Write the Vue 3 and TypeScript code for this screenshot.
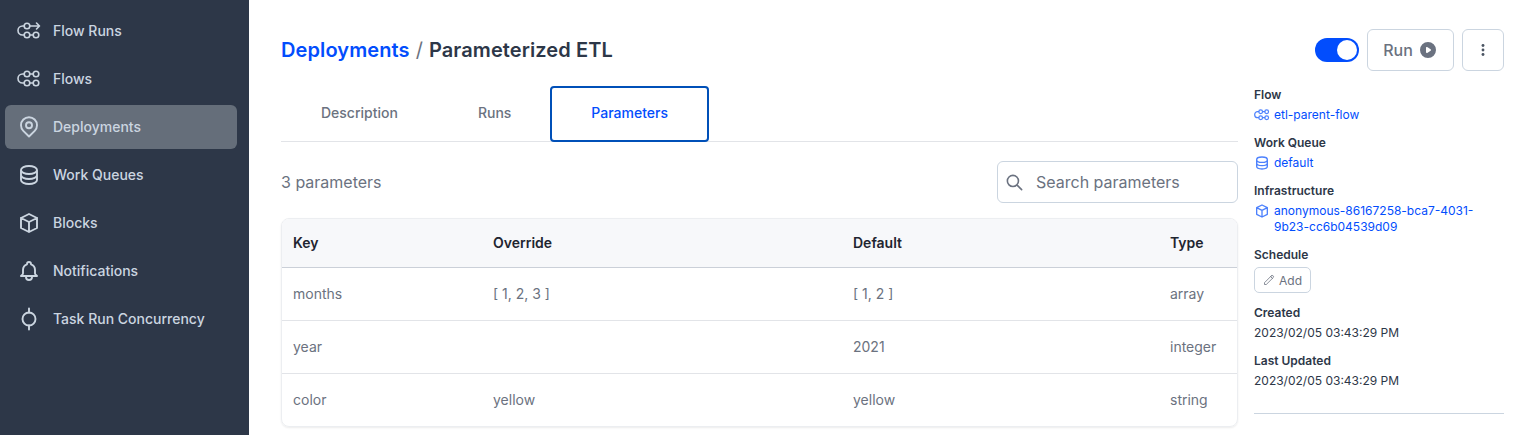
<template>
  <div class="page">
    <nav class="sidebar">
      <a v-for="item in navItems" :key="item.label" class="nav-item" :class="{ active: item.label === 'Deployments' }">
        <svg class="nav-icon" viewBox="0 0 24 24" fill="none" stroke="currentColor" stroke-width="1.9" stroke-linecap="round" stroke-linejoin="round">
          <template v-if="item.icon === 'flowRun'">
            <g stroke-width="1.6">
              <circle cx="10" cy="7" r="2.800" />
              <circle cx="10" cy="16" r="2.800" />
              <circle cx="19" cy="16" r="2.800" />
              <path d="M12.800 7H22.500M19.500 4l3 3-3 3M12.800 16h3.400M7.200 7H5.500a4.500 4.500 0 0 0 0 9h1.700" />
            </g>
          </template>
          <template v-else-if="item.icon === 'flow'">
            <g stroke-width="1.6">
              <circle cx="10" cy="7" r="2.800" />
              <circle cx="19" cy="7" r="2.800" />
              <circle cx="10" cy="16" r="2.800" />
              <circle cx="19" cy="16" r="2.800" />
              <path d="M12.800 7h3.400M12.800 16h3.400M7.200 7H5.500a4.500 4.500 0 0 0 0 9h1.700" />
            </g>
          </template>
          <template v-else-if="item.icon === 'pin'">
            <path d="M12 21.500l-5.700-5.700a8 8 0 1 1 11.400 0L12 21.500z" />
            <circle cx="12" cy="10.200" r="3" />
          </template>
          <path v-else-if="item.icon === 'db'" :d="dbPath" />
          <path v-else-if="item.icon === 'cube'" :d="cubePath" />
          <path v-else-if="item.icon === 'bell'" d="M15 17h5l-1.400-1.400A2 2 0 0 1 18 14.200V11a6 6 0 0 0-4-5.700V5a2 2 0 1 0-4 0v.3A6 6 0 0 0 6 11v3.200c0 .5-.2 1-.6 1.400L4 17h5m6 0v1a3 3 0 1 1-6 0v-1m6 0H9" />
          <template v-else>
            <circle cx="12" cy="12" r="6.500" />
            <path d="M12 1.500v4M12 18.500v4" />
          </template>
        </svg>
        <span class="nav-label">{{ item.label }}</span>
      </a>
    </nav>

    <main class="content">
      <div class="main-col">
        <h1 class="crumbs">
          <a class="crumb-link">Deployments</a>
          <span class="slash">/</span>
          <span>Parameterized ETL</span>
        </h1>

        <div class="tabs">
          <button v-for="tab in tabs" :key="tab" class="tab" :class="{ selected: tab === 'Parameters' }">{{ tab }}</button>
        </div>

        <div class="toolbar">
          <span class="count">3 parameters</span>
          <div class="search">
            <svg class="search-icon" viewBox="0 0 24 24" fill="none" stroke="currentColor" stroke-width="2" stroke-linecap="round" stroke-linejoin="round">
              <path d="M21 21l-6-6m2-5a7 7 0 1 1-14 0 7 7 0 0 1 14 0z" />
            </svg>
            <span>Search parameters</span>
          </div>
        </div>

        <div class="table">
          <div class="row head">
            <div>Key</div>
            <div>Override</div>
            <div>Default</div>
            <div>Type</div>
          </div>
          <div v-for="row in rows" :key="row.key" class="row">
            <div>{{ row.key }}</div>
            <div>{{ row.override }}</div>
            <div>{{ row.def }}</div>
            <div>{{ row.type }}</div>
          </div>
        </div>
      </div>

      <aside class="side-col">
        <div class="actions">
          <div class="toggle"><span class="knob"></span></div>
          <button class="btn run">
            Run
            <svg class="play" viewBox="0 0 20 20" fill="currentColor">
              <path fill-rule="evenodd" d="M10 18a8 8 0 1 0 0-16 8 8 0 0 0 0 16zM9.600 7.200A1 1 0 0 0 8 8v4a1 1 0 0 0 1.600.8l3-2a1 1 0 0 0 0-1.600l-3-2z" />
            </svg>
          </button>
          <button class="btn more" aria-label="More">
            <svg viewBox="0 0 20 20" fill="currentColor" width="18" height="18">
              <circle cx="10" cy="5" r="1.600" />
              <circle cx="10" cy="10" r="1.600" />
              <circle cx="10" cy="15" r="1.600" />
            </svg>
          </button>
        </div>

        <dl class="meta">
          <dt>Flow</dt>
          <dd class="link">
            <svg class="meta-icon" viewBox="0 0 24 24" fill="none" stroke="currentColor" stroke-width="1.800" stroke-linecap="round">
              <circle cx="10" cy="7" r="2.800" />
              <circle cx="19" cy="7" r="2.800" />
              <circle cx="10" cy="16" r="2.800" />
              <circle cx="19" cy="16" r="2.800" />
              <path d="M12.800 7h3.400M12.800 16h3.400M7.200 7H5.500a4.500 4.500 0 0 0 0 9h1.700" />
            </svg>
            <span>etl-parent-flow</span>
          </dd>
          <dt>Work Queue</dt>
          <dd class="link">
            <svg class="meta-icon" viewBox="0 0 24 24" fill="none" stroke="currentColor" stroke-width="2" stroke-linecap="round" stroke-linejoin="round">
              <path :d="dbPath" />
            </svg>
            <span>default</span>
          </dd>
          <dt>Infrastructure</dt>
          <dd class="link">
            <svg class="meta-icon" viewBox="0 0 24 24" fill="none" stroke="currentColor" stroke-width="2" stroke-linecap="round" stroke-linejoin="round">
              <path :d="cubePath" />
            </svg>
            <span>anonymous-86167258-bca7-4031-9b23-cc6b04539d09</span>
          </dd>
          <dt>Schedule</dt>
          <dd class="schedule">
            <button class="add">
              <svg viewBox="0 0 24 24" fill="none" stroke="currentColor" stroke-width="1.600" stroke-linecap="round" stroke-linejoin="round" width="12" height="12">
                <path d="M15.200 5.200l3.600 3.600M16.700 3.700a2.500 2.500 0 1 1 3.600 3.600L6.500 21H3v-3.600L16.700 3.700z" />
              </svg>
              Add
            </button>
          </dd>
          <dt>Created</dt>
          <dd>2023/02/05 03:43:29 PM</dd>
          <dt>Last Updated</dt>
          <dd>2023/02/05 03:43:29 PM</dd>
        </dl>
        <hr class="divider" />
      </aside>
    </main>
  </div>
</template>

<script setup lang="ts">
interface NavItem {
  label: string;
  icon: string;
}

interface ParamRow {
  key: string;
  override: string;
  def: string;
  type: string;
}

const dbPath =
  'M4 7v10c0 2.200 3.600 4 8 4s8-1.800 8-4V7M4 7c0 2.200 3.600 4 8 4s8-1.800 8-4M4 7c0-2.200 3.600-4 8-4s8 1.800 8 4M20 12c0 2.200-3.600 4-8 4s-8-1.800-8-4';
const cubePath =
  'M20 7l-8-4-8 4m16 0l-8 4m8-4v10l-8 4m0-10L4 7m8 4v10M4 7v10l8 4';

const navItems: NavItem[] = [
  { label: 'Flow Runs', icon: 'flowRun' },
  { label: 'Flows', icon: 'flow' },
  { label: 'Deployments', icon: 'pin' },
  { label: 'Work Queues', icon: 'db' },
  { label: 'Blocks', icon: 'cube' },
  { label: 'Notifications', icon: 'bell' },
  { label: 'Task Run Concurrency', icon: 'task' },
];

const tabs = ['Description', 'Runs', 'Parameters'];

const rows: ParamRow[] = [
  { key: 'months', override: '[ 1, 2, 3 ]', def: '[ 1, 2 ]', type: 'array' },
  { key: 'year', override: '', def: '2021', type: 'integer' },
  { key: 'color', override: 'yellow', def: 'yellow', type: 'string' },
];
</script>

<style>
html,
body {
  margin: 0;
  background: #fff;
  overflow: hidden;
}
</style>

<style scoped>
.page {
  display: flex;
  height: 435px;
  font-family: Inter, "Liberation Sans", sans-serif;
  color: #2d3748;
}

/* sidebar */
.sidebar {
  width: 249px;
  flex-shrink: 0;
  box-sizing: border-box;
  padding: 9px 12px 0 5px;
  background: #2d3748;
  display: flex;
  flex-direction: column;
  gap: 4px;
}

.nav-item {
  height: 44px;
  display: flex;
  align-items: center;
  gap: 12px;
  padding-left: 12px;
  border-radius: 6px;
  color: #cbd5e0;
  font-size: 14px;
  font-weight: 500;
}

.nav-item.active {
  background: #656e7a;
}

.nav-icon {
  width: 24px;
  height: 24px;
  flex-shrink: 0;
}

.nav-label {
  margin-bottom: 2px;
}

/* main */
.content {
  flex: 1;
  display: flex;
  gap: 16px;
  padding: 0 12px 0 32px;
  min-width: 0;
}

.main-col {
  flex: 1;
  min-width: 0;
}

.crumbs {
  margin: 0;
  height: 86px;
  padding-top: 14px;
  box-sizing: border-box;
  display: flex;
  align-items: center;
  gap: 6px;
  font-size: 20px;
  line-height: 28px;
  font-weight: 600;
  letter-spacing: 0.1px;
  color: #2d3748;
}

.crumb-link {
  color: #024dfd;
}

.slash {
  font-weight: 400;
  color: #6b7280;
}

.tabs {
  display: flex;
  height: 56px;
  border-bottom: 1px solid #e2e4e8;
  box-sizing: border-box;
}

.tab {
  height: 56px;
  padding: 0 40px 3px;
  border: 0;
  background: none;
  font-family: inherit;
  font-size: 14px;
  font-weight: 500;
  color: #6b7280;
}

.tab.selected {
  margin-left: -1px;
  padding: 0 39px 3px;
  border: 2px solid #0050b8;
  border-radius: 4px;
  color: #024dfd;
}

.toolbar {
  height: 76px;
  padding-top: 19px;
  box-sizing: border-box;
  display: flex;
  align-items: flex-start;
  justify-content: space-between;
}

.count {
  line-height: 42px;
  font-size: 16px;
  color: #6b7280;
}

.search {
  width: 241px;
  height: 42px;
  box-sizing: border-box;
  display: flex;
  align-items: center;
  gap: 12px;
  padding-left: 7px;
  border: 1px solid #cbd5e0;
  border-radius: 6px;
  font-size: 16px;
  color: #6b7280;
}

.search-icon {
  width: 19px;
  height: 19px;
}

.table {
  border: 1px solid #eceef1;
  border-radius: 8px;
  overflow: hidden;
  box-shadow: 0 1px 2px rgba(0, 0, 0, 0.08);
}

.row {
  display: grid;
  grid-template-columns: 200px 360px 317px 1fr;
  align-items: center;
  height: 53px;
  box-sizing: border-box;
  padding: 0 0 2px 11px;
  border-bottom: 1px solid #e2e4e8;
  font-size: 14px;
  color: #6b7280;
}

.row:last-child {
  height: 52px;
  border-bottom: 0;
}

.row.head {
  height: 49px;
  border-bottom-color: #cbd0d8;
  background: #f7f8fa;
  font-weight: 600;
  color: #1f2530;
}

/* right column */
.side-col {
  width: 250px;
  flex-shrink: 0;
}

.actions {
  height: 86px;
  padding-top: 29px;
  box-sizing: border-box;
  display: flex;
  align-items: flex-start;
  justify-content: flex-end;
  gap: 8px;
}

.toggle {
  width: 44px;
  height: 24px;
  margin: 9px 0 0;
  box-sizing: border-box;
  padding: 2px;
  display: flex;
  justify-content: flex-end;
  border-radius: 12px;
  background: #024dfd;
}

.knob {
  width: 20px;
  height: 20px;
  border-radius: 50%;
  background: #fff;
}

.btn {
  height: 42px;
  box-sizing: border-box;
  border: 1px solid #cbd5e0;
  border-radius: 6px;
  background: #fff;
  color: #6b7280;
  font-family: inherit;
  display: flex;
  align-items: center;
  justify-content: center;
}

.run {
  width: 87px;
  gap: 5px;
  font-size: 16px;
  font-weight: 500;
}

.play {
  width: 20px;
  height: 20px;
}

.more {
  width: 42px;
  padding: 0;
  color: #4b5563;
}

.meta {
  margin: 0;
  padding-top: 1px;
  font-size: 12px;
  line-height: 16px;
}

.meta dt {
  font-weight: 600;
  color: #2d3748;
  margin-bottom: 4px;
}

.meta dd {
  margin: 0 0 8px;
  padding-bottom: 4px;
  color: #2d3748;
}

.meta dd.schedule {
  padding-bottom: 0;
  margin-bottom: 12px;
}

.meta dd.link {
  display: flex;
  align-items: flex-start;
  gap: 4px;
  color: #024dfd;
}

.meta-icon {
  width: 16px;
  height: 16px;
  flex-shrink: 0;
  opacity: 0.7;
}

.add {
  height: 26px;
  width: 57px;
  box-sizing: border-box;
  border: 1px solid #cbd5e0;
  border-radius: 5px;
  background: #fff;
  color: #6b7280;
  font-family: inherit;
  font-size: 12px;
  font-weight: 400;
  display: flex;
  align-items: center;
  justify-content: center;
  gap: 4px;
  padding: 0;
}

.divider {
  margin: 20px 0 0;
  border: 0;
  border-top: 1px solid #cbd5e0;
}
</style>
